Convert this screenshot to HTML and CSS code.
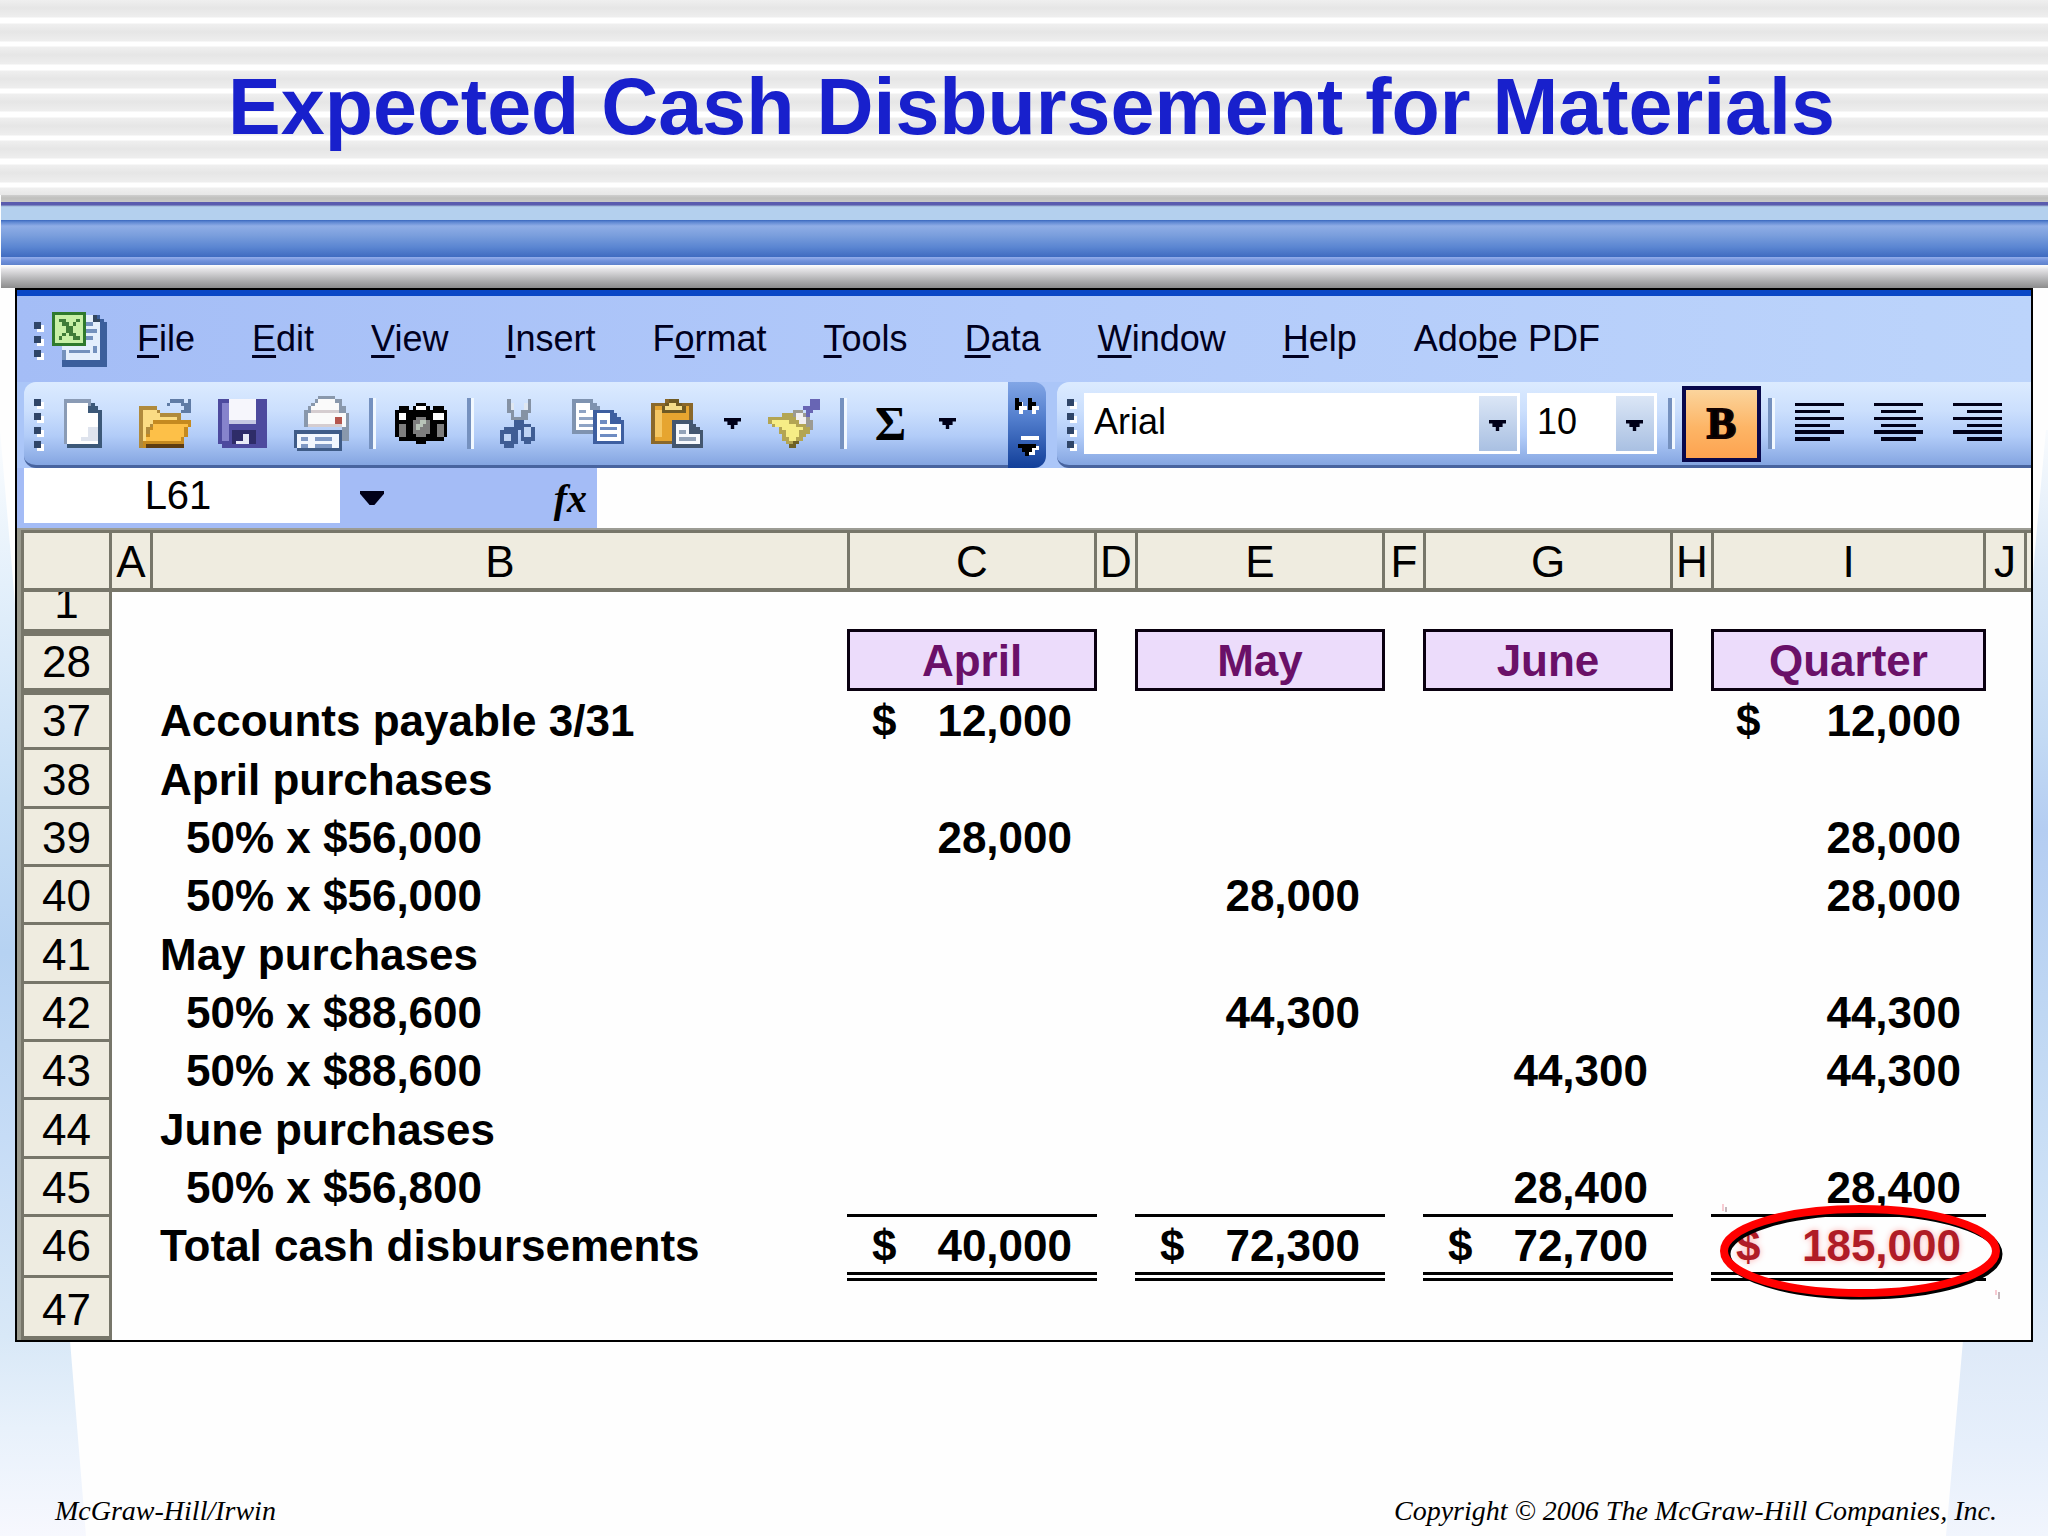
FILE: index.html
```html
<!DOCTYPE html>
<html lang="en">
<head>
    <meta charset="UTF-8">
    <meta name="viewport" content="width=device-width, initial-scale=1.0">
    <title>Expected Cash Disbursement for Materials</title>
    <link rel="stylesheet" href="styles.css">
</head>
<body>
    <header class="banner">
        <h1>Expected Cash Disbursement for Materials</h1>
    </header>
    <div class="bands"></div>

    <main class="window">
        <div class="title-strip"></div>

        <nav class="menu-bar">
            <span class="grip"><i></i><i></i><i></i></span>
            <svg class="icon" viewBox="0 0 16 16" shape-rendering="crispEdges">
                <path fill="#3c5f9c" d="M13 1h1v1h1v1h1v13H3v-2h10z"/>
                <path fill="#e4effc" d="M3 1h10v1h1v12H3z"/>
                <path fill="#7391bd" d="M10 3h2v1h-2zM10 5h3v1h-3zM10 7h2v1h-2zM5 11h6v1H5zM12 10h1v2h-1zM3 11h1v3H3z"/>
                <path fill="#34475f" d="M12 1h1v1h1v1h-2z"/>
                <path fill="#2f7a2c" d="M0 0h10v10H0z"/>
                <path fill="#c8f0a6" d="M1 1h8v8H1z"/>
                <path fill="#3f7c38" d="M2 2h2v1h1v1h1V3h1V2h1v1H7v1H6v2h1v1h1v1H6V7H5V6H4v1H3v1H2V7h1V6h1V4H3V3H2z"/>
            </svg>
            <div class="menu-items">
                <button><u>F</u>ile</button>
                <button><u>E</u>dit</button>
                <button><u>V</u>iew</button>
                <button><u>I</u>nsert</button>
                <button>F<u>o</u>rmat</button>
                <button><u>T</u>ools</button>
                <button><u>D</u>ata</button>
                <button><u>W</u>indow</button>
                <button><u>H</u>elp</button>
                <button>Ado<u>b</u>e PDF</button>
            </div>
        </nav>

        <div class="toolbars">
            <div class="toolbar standard">
                <span class="grip"><i></i><i></i><i></i><i></i></span>
                <button class="tool" aria-label="New">
                    <svg class="icon" viewBox="0 0 16 16" shape-rendering="crispEdges">
                        <path fill="#8a9bb5" d="M2 1h8v1h1v1h1v1h1v10H2z"/>
                        <path fill="#fff" d="M3 2h6v3h3v9H3z"/>
                        <path fill="#dfe4ee" d="M9 9h3v4H7v-1h2z"/>
                        <path fill="#3c5878" d="M10 2h1v1h1v1h1v11H3v-1h9V5H9V3h1z"/>
                    </svg>
                </button>
                <button class="tool" aria-label="Open">
                    <svg class="icon" viewBox="0 0 16 16" shape-rendering="crispEdges">
                        <path fill="#b08a3c" d="M1 3h5v1h1v1h6v3H5v7H1z"/>
                        <path fill="#fbdc84" d="M2 4h4v1h1v1h5v2H4v1H3v4H2z"/>
                        <path fill="#c58a20" d="M5 7h11v2h-1v3h-1v2h-1v1H2v-2h1v-2h1V9h1z"/>
                        <path fill="#fdc048" d="M5 8h10v1h-1v3h-1v1H3v-1h1v-2h1z"/>
                        <path fill="#5d3d12" d="M3 14h11v1H3z"/>
                        <path fill="#5f7ba5" d="M10 1h4v1h1V1h1v4h-3V4h1V3h-1V2h-3v1H9V2h1z"/>
                    </svg>
                </button>
                <button class="tool" aria-label="Save">
                    <svg class="icon" viewBox="0 0 16 16" shape-rendering="crispEdges">
                        <path fill="#4d4a9e" d="M1 1h14v14H2v-1H1z"/>
                        <path fill="#8683cc" d="M2 2h2v11H2z"/>
                        <path fill="#f6f6fc" d="M4 1h8v7H4z"/>
                        <path fill="#c5c8e4" d="M4 7h8v1H4z"/>
                        <path fill="#2e2c68" d="M5 10h7v4H5z"/>
                        <path fill="#e8eaf6" d="M8 11h2v3H6v-1h2z"/>
                    </svg>
                </button>
                <button class="tool" aria-label="Print">
                    <svg class="icon" viewBox="0 0 16 16" shape-rendering="crispEdges">
                        <path fill="#8998ac" d="M7 0h5v1h2v2h1v2h1v8h-2V9H3V4h1V3h1V2h1V1h1z"/>
                        <path fill="#fafafa" d="M7 1h5v1h1v3h2v4H4V5h1V3h1V2h1z"/>
                        <path fill="#d5cdd0" d="M5 4h8v1H5zM4 8h10v1H4z"/>
                        <path fill="#b5564e" d="M12 6h2v2h-2z"/>
                        <path fill="#3f5c88" d="M0 10h14v6H1v-1H0z"/>
                        <path fill="#f2f7fe" d="M1 11h12v4H1z"/>
                        <path fill="#7f99c4" d="M2 12h2v1H2zM6 12h5v1H6zM2 14h2v1H2zM6 14h5v1H6z"/>
                    </svg>
                </button>
                <span class="sep"></span>
                <button class="tool" aria-label="Camera">
                    <svg class="icon" viewBox="0 0 16 16" shape-rendering="crispEdges">
                        <path fill="#000" d="M7 2h3v1h1v1h1V3h3v1h1v8h-1v1h-5v1H7v-1H2v-1H1V4h1V3h3v1h1V3h1z"/>
                        <path fill="#fff" d="M7 3h3v1H7zM2 5h2v2H2zM12 5h3v2h-3z"/>
                        <path fill="#7d7d7d" d="M2 8h2v4H2zM13 8h2v4h-2zM6 7h1V6h3v1h1v4h-1v1H7v-1H6z"/>
                        <path fill="#b9c4b9" d="M8 7h2v1H9v1H8v1H7V8h1z"/>
                    </svg>
                </button>
                <span class="sep"></span>
                <button class="tool" aria-label="Cut">
                    <svg class="icon" viewBox="0 0 16 16" shape-rendering="crispEdges">
                        <path fill="#8592a4" d="M5 1h1v3h1v2h1v2H7V7H6V5H5zM11 1h1v4h-1v2h-1v1H8V6h1V4h1V2h1z"/>
                        <path fill="#dfe7f1" d="M6 2h1v2H6zM10 2h1v2h-1z"/>
                        <path fill="#3f5d94" d="M7 7h3v1h2v1h1v4h-1v1h-2v-1H9v-3H8v4H7v1H4v-1H3v-4h1V9h3z"/>
                        <path fill="#bfd4f5" d="M4 11h2v2H4zM10 9h2v3h-2z"/>
                    </svg>
                </button>
                <button class="tool" aria-label="Copy">
                    <svg class="icon" viewBox="0 0 16 16" shape-rendering="crispEdges">
                        <path fill="#7f93b0" d="M1 1h6v1h1v1h1v8H1z"/>
                        <path fill="#fff" d="M2 2h4v2h2v6H2z"/>
                        <path fill="#8ea3c4" d="M3 4h2v1H3zM3 6h4v1H3zM3 8h4v1H3z"/>
                        <path fill="#3e5fa0" d="M7 4h6v1h1v1h1v1h1v7H7z"/>
                        <path fill="#fff" d="M8 5h4v3h3v5H8z"/>
                        <path fill="#6e8cc2" d="M9 7h2v1H9zM9 9h5v1H9zM9 11h5v1H9z"/>
                    </svg>
                </button>
                <button class="tool" aria-label="Paste">
                    <svg class="icon" viewBox="0 0 16 16" shape-rendering="crispEdges">
                        <path fill="#8a682a" d="M1 2h4V1h4v1h4v12H1z"/>
                        <path fill="#e6a530" d="M2 3h10v10H2z"/>
                        <path fill="#f5c763" d="M2 4h2v8H2z"/>
                        <path fill="#6f5a24" d="M4 3h1V2h1V1h3v1h1v1h1v2H4z"/>
                        <path fill="#f4dc8a" d="M6 2h2v2H6zM5 3h5v1H5z"/>
                        <path fill="#43566f" d="M7 7h6v1h1v1h1v1h1v5H7z"/>
                        <path fill="#f7f9fc" d="M8 8h4v3h3v3H8z"/>
                        <path fill="#93a3b8" d="M9 10h2v1H9zM9 12h5v1H9z"/>
                    </svg>
                </button>
                <button class="arrow" aria-label="Paste options"></button>
                <button class="tool" aria-label="Format Painter">
                    <svg class="icon" viewBox="0 0 16 16" shape-rendering="crispEdges">
                        <path fill="#6865b4" d="M13 1h3v3h-2v1h-1v1h-1V4h-1V3h2z"/>
                        <path fill="#9c9a92" d="M8 4h3v1h1v1h1v1h1v3h-1V9h-1V8h-2V7H9V6H7V5h1z"/>
                        <path fill="#f1eef0" d="M9 5h2v1h1v2h-2V7H9z"/>
                        <path fill="#b3a553" d="M1 6h4V5h3v1h1v1h1v1h2v1h1v2h-1v1h-1v1h-1v1H9v1H7v-1H6v-1H5v-2H4V9H2V8H1z"/>
                        <path fill="#f6ed86" d="M2 7h5v1h2v1h2v1h-1v2H9v1H7v-1H6v-2H5V9H3V8H2z"/>
                        <path fill="#6e6126" d="M8 13h2v1H9v1H7v-1h1z"/>
                    </svg>
                </button>
                <span class="sep"></span>
                <button class="tool sigma" aria-label="AutoSum">Σ</button>
                <button class="arrow" aria-label="AutoSum options"></button>
            </div>
            <button class="overflow" aria-label="Toolbar Options">
                <svg viewBox="0 0 38 86" shape-rendering="crispEdges">
                    <path fill="#fff" d="M11 20h4v4h4v4h-4v4h-4zM24 20h4v4h3v4h-3v4h-4zM13 54h18v4H13zM20 64h11v4h-4v5h-7z"/>
                    <path fill="#000" d="M7 16h4v4h3v4h-3v4H7zM20 16h4v4h4v4h-4v4h-4zM10 62h18v4h-4v4h-3v4h-4v-4h-3v-4h-4z"/>
                </svg>
            </button>
            <div class="toolbar formatting">
                <span class="grip"><i></i><i></i><i></i><i></i></span>
                <div class="combo font-name">
                    <select aria-label="Font"><option>Arial</option></select>
                    <span class="combo-arrow"></span>
                </div>
                <div class="combo font-size">
                    <select aria-label="Font Size"><option>10</option></select>
                    <span class="combo-arrow"></span>
                </div>
                <span class="sep"></span>
                <button class="bold-button" aria-label="Bold">B</button>
                <span class="sep"></span>
                <div class="align-group">
                    <button class="tool" aria-label="Align Left">
                        <svg class="icon" viewBox="0 0 16 16" shape-rendering="crispEdges">
                            <path fill="#000018" d="M1 2h14v1H1zM1 4h10v1H1zM1 6h14v1H1zM1 8h10v1H1zM1 10h14v1H1zM1 12h10v1H1z"/>
                        </svg>
                    </button>
                    <button class="tool" aria-label="Center">
                        <svg class="icon" viewBox="0 0 16 16" shape-rendering="crispEdges">
                            <path fill="#000018" d="M1 2h14v1H1zM3 4h10v1H3zM1 6h14v1H1zM3 8h10v1H3zM1 10h14v1H1zM3 12h10v1H3z"/>
                        </svg>
                    </button>
                    <button class="tool" aria-label="Align Right">
                        <svg class="icon" viewBox="0 0 16 16" shape-rendering="crispEdges">
                            <path fill="#000018" d="M1 2h14v1H1zM5 4h10v1H5zM1 6h14v1H1zM5 8h10v1H5zM1 10h14v1H1zM5 12h10v1H5z"/>
                        </svg>
                    </button>
                </div>
            </div>
        </div>

        <div class="formula-bar">
            <input class="name-box" type="text" value="L61" aria-label="Name Box">
            <div class="formula-tools">
                <button class="arrow large" aria-label="Names"></button>
                <button class="fx" aria-label="Insert Function"><span>f</span>x</button>
            </div>
            <input class="formula" type="text" aria-label="Formula">
        </div>

        <div class="sheet">
            <table>
                <colgroup>
                    <col class="w-head"><col class="w-gap"><col>
                    <col class="w-month"><col class="w-gap">
                    <col class="w-month"><col class="w-gap">
                    <col class="w-month"><col class="w-gap">
                    <col class="w-quarter"><col class="w-gap"><col class="w-edge">
                </colgroup>
                <thead>
                    <tr>
                        <th></th><th>A</th><th>B</th><th>C</th><th>D</th><th>E</th>
                        <th>F</th><th>G</th><th>H</th><th>I</th><th>J</th><th></th>
                    </tr>
                </thead>
                <tbody>
                    <tr class="first">
                        <th><span class="clipped">1</span></th>
                        <td colspan="11"></td>
                    </tr>
                    <tr class="months">
                        <th>28</th><td></td><td></td>
                        <td><div class="month">April</div></td><td></td>
                        <td><div class="month">May</div></td><td></td>
                        <td><div class="month">June</div></td><td></td>
                        <td><div class="month">Quarter</div></td><td></td><td></td>
                    </tr>
                    <tr class="opening">
                        <th>37</th><td></td><td class="label">Accounts payable 3/31</td>
                        <td><div class="money"><span>$</span><span>12,000</span></div></td><td></td>
                        <td></td><td></td>
                        <td></td><td></td>
                        <td><div class="money"><span>$</span><span>12,000</span></div></td><td></td><td></td>
                    </tr>
                    <tr class="group">
                        <th>38</th><td></td><td class="label">April purchases</td>
                        <td></td><td></td><td></td><td></td><td></td><td></td><td></td><td></td><td></td>
                    </tr>
                    <tr>
                        <th>39</th><td></td><td class="label indent">50% x $56,000</td>
                        <td class="number">28,000</td><td></td>
                        <td></td><td></td>
                        <td></td><td></td>
                        <td class="number">28,000</td><td></td><td></td>
                    </tr>
                    <tr>
                        <th>40</th><td></td><td class="label indent">50% x $56,000</td>
                        <td></td><td></td>
                        <td class="number">28,000</td><td></td>
                        <td></td><td></td>
                        <td class="number">28,000</td><td></td><td></td>
                    </tr>
                    <tr class="group">
                        <th>41</th><td></td><td class="label">May purchases</td>
                        <td></td><td></td><td></td><td></td><td></td><td></td><td></td><td></td><td></td>
                    </tr>
                    <tr>
                        <th>42</th><td></td><td class="label indent">50% x $88,600</td>
                        <td></td><td></td>
                        <td class="number">44,300</td><td></td>
                        <td></td><td></td>
                        <td class="number">44,300</td><td></td><td></td>
                    </tr>
                    <tr>
                        <th>43</th><td></td><td class="label indent">50% x $88,600</td>
                        <td></td><td></td>
                        <td></td><td></td>
                        <td class="number">44,300</td><td></td>
                        <td class="number">44,300</td><td></td><td></td>
                    </tr>
                    <tr class="group">
                        <th>44</th><td></td><td class="label">June purchases</td>
                        <td></td><td></td><td></td><td></td><td></td><td></td><td></td><td></td><td></td>
                    </tr>
                    <tr>
                        <th>45</th><td></td><td class="label indent">50% x $56,800</td>
                        <td></td><td></td>
                        <td></td><td></td>
                        <td class="number">28,400</td><td></td>
                        <td class="number">28,400</td><td></td><td></td>
                    </tr>
                    <tr class="totals">
                        <th>46</th><td></td><td class="label">Total cash disbursements</td>
                        <td><div class="money total"><span>$</span><span>40,000</span></div></td><td></td>
                        <td><div class="money total"><span>$</span><span>72,300</span></div></td><td></td>
                        <td><div class="money total"><span>$</span><span>72,700</span></div></td><td></td>
                        <td>
                            <div class="money total circled">
                                <span>$</span><span>185,000</span>
                                <svg class="ring" viewBox="0 0 284 95">
                                    <ellipse cx="143" cy="49" rx="136" ry="42" fill="none" stroke="#000" stroke-width="7"/>
                                    <ellipse cx="140" cy="46" rx="136" ry="42" fill="none" stroke="#f00" stroke-width="8"/>
                                    <path stroke="#f29aa8" d="M3 -1v7M276 85v5"/>
                                    <path stroke="#8a6f78" d="M6 2v5M279 87v7"/>
                                </svg>
                            </div>
                        </td><td></td><td></td>
                    </tr>
                    <tr class="last">
                        <th>47</th>
                        <td colspan="11"></td>
                    </tr>
                </tbody>
            </table>
        </div>
    </main>

    <footer class="footer">
        <span>McGraw-Hill/Irwin</span>
        <span>Copyright © 2006 The McGraw-Hill Companies, Inc.</span>
    </footer>
</body>
</html>
```
FILE: styles.css
```css
* {
    box-sizing: border-box;
}

body {
    position: relative;
    margin: 0;
    min-height: 100vh;
    display: flex;
    flex-direction: column;
    background: #fefefe;
    font-family: "Liberation Sans", Arial, sans-serif;
    color: #000;
    overflow-x: hidden;
}

/* pale blue wedges down both sides of the slide */
body::before,
body::after {
    content: "";
    position: absolute;
    top: 0;
    bottom: 0;
    z-index: -1;
}

body::before {
    left: 0;
    width: 86px;
    background: linear-gradient(#fff 26%, #e4f0fb 38%, #c6def5 52%, #b6d2f2 62%, #c6dcf6 74%, #d8e8f7 87%, #e8f1fb 93%, #f7f8fe 100%);
    clip-path: polygon(0 28%, 17% 39%, 50% 66%, 81% 87%, 100% 100%, 0 100%);
}

body::after {
    right: 0;
    width: 102px;
    background: linear-gradient(#fff 26%, #dbe9f8 37%, #c3daf4 48%, #b4cdf2 54%, #bfd7f3 66%, #d0e3f7 80%, #dfeaf8 88%, #e6effb 94%, #f1f5fd 100%);
    clip-path: polygon(98% 28%, 87% 36%, 50% 66%, 17% 87%, 0 100%, 100% 100%, 100% 28%);
}

button,
input,
select {
    font: inherit;
    color: inherit;
    border: none;
    border-radius: 0;
    background: none;
    margin: 0;
    padding: 0;
}

button {
    cursor: pointer;
}

/* slide heading */
.banner {
    height: 195px;
    padding: 62px 0 0 15px;
    background: linear-gradient(#efefef 0, #e6e6e6 8px, #eee 17px, #fff 18px, #fff 23px, #efefef 24px, #e6e6e6 32px, #eee 41px, #fff 42px, #fff 46px, #efefef 47px);
    background-size: 100% 47px;
}

.banner h1 {
    margin: 0;
    font-size: 79px;
    line-height: 90px;
    text-align: center;
    color: #1820cc;
}

.bands {
    height: 93px;
    margin-left: 1px;
    background: linear-gradient(
        #cfcfcf 0, #c0c0be 3px, #c8c8c6 7px,
        #5a5cae 7px, #5a5cae 10px, #9bb3d3 11px, #b4d0ee 12px, #b4d0ee 25px,
        #3a66bd 25px, #5d87d2 27px, #8fade6 31px, #7b9fdd 40px, #5b86d2 52px, #3f6bc0 62px,
        #94aeea 62px, #6f90da 66px, #5e82cc 70px,
        #fdfdff 70px, #f4f4f4 72px, #e6e5e8 74px, #b4b4b6 84px, #8c8c8c 93px
    );
}

/* spreadsheet window */
.window {
    margin: 0 15px;
    border: 2px solid #000;
    background: #fefefe;
}

.title-strip {
    height: 6px;
    background: #0a47c6;
}

.menu-bar {
    display: flex;
    align-items: center;
    height: 86px;
    padding-left: 17px;
    background: linear-gradient(to right, #a4bdf6, #b2cafa 50%, #bcd4fb);
}

.menu-bar .icon {
    margin: 0 30px 0 8px;
}

.menu-items {
    display: flex;
    gap: 57px;
    font-size: 36px;
    line-height: 40px;
    color: #000020;
}

.menu-items button {
    white-space: nowrap;
}

.menu-items u {
    text-decoration-thickness: 3px;
    text-underline-offset: 4px;
    text-decoration-skip-ink: none;
}

.grip {
    display: flex;
    flex-direction: column;
    flex: none;
    gap: 7px;
    width: 10px;
}

.grip i {
    width: 7px;
    height: 7px;
    background: #2f4568;
    box-shadow: 3px 3px 0 #fff;
}

.icon {
    display: block;
    flex: none;
    width: 55px;
    height: 55px;
}

.toolbars {
    display: flex;
    height: 86px;
    padding-left: 7px;
    background: #abc6f8;
}

.toolbar {
    display: flex;
    align-items: center;
    background: linear-gradient(#dcebff, #cbdffd 35%, #b2ccf8 65%, #84a5e1);
    border-bottom: 3px solid #48649f;
}

.standard {
    gap: 24px;
    padding: 0 52px 0 10px;
    border-radius: 12px 0 0 12px;
}

.standard .grip {
    margin-right: -11px;
}

.standard .sep {
    margin: 0 -8px 0 -4px;
}

.standard .arrow {
    margin-left: -3px;
}

.tool {
    flex: none;
    width: 55px;
    height: 55px;
}

.sep {
    flex: none;
    width: 7px;
    height: 51px;
    border-left: 4px solid #7591bf;
    border-right: 3px solid #f1f8ff;
}

.arrow {
    flex: none;
    width: 17px;
    height: 11px;
    background: #000018;
    clip-path: polygon(0 0, 100% 0, 100% 32%, 80% 32%, 80% 64%, 60% 64%, 60% 100%, 40% 100%, 40% 64%, 20% 64%, 20% 32%, 0 32%);
}

.arrow.large {
    width: 24px;
    height: 14px;
    clip-path: polygon(0 0, 100% 0, 100% 20%, 60% 100%, 40% 100%, 0 20%);
}

.sigma {
    font-family: "Liberation Serif", "Times New Roman", serif;
    font-size: 48px;
    font-weight: bold;
    line-height: 55px;
}

.overflow {
    flex: none;
    width: 38px;
    background: linear-gradient(#82a6e6, #4f7bcb 45%, #123f99);
    border-radius: 0 12px 12px 0;
}

.overflow svg {
    display: block;
    width: 38px;
    height: 86px;
}

.formatting {
    flex: 1;
    gap: 7px;
    margin-left: 11px;
    padding-left: 10px;
    border-radius: 12px 0 0 12px;
}

.combo {
    position: relative;
    flex: none;
    height: 61px;
    background: #fff;
    font-size: 36px;
}

.font-name {
    width: 436px;
}

.font-size {
    width: 130px;
    margin-right: 4px;
}

.combo select {
    width: 100%;
    height: 57px;
    padding-left: 10px;
    appearance: none;
}

.combo-arrow {
    position: absolute;
    top: 3px;
    right: 3px;
    bottom: 3px;
    width: 38px;
    background: linear-gradient(#dbe6f6, #a9c0e2);
    pointer-events: none;
}

.combo-arrow::after {
    content: "";
    position: absolute;
    top: 24px;
    left: 10px;
    width: 17px;
    height: 11px;
    background: #000018;
    clip-path: polygon(0 0, 100% 0, 100% 32%, 80% 32%, 80% 64%, 60% 64%, 60% 100%, 40% 100%, 40% 64%, 20% 64%, 20% 32%, 0 32%);
}

.bold-button {
    flex: none;
    width: 79px;
    height: 76px;
    border: 4px solid #08084c;
    background: linear-gradient(#fbd49c, #fdb566 55%, #fda350);
    font-family: "Liberation Serif", "Times New Roman", serif;
    font-size: 44px;
    font-weight: bold;
    -webkit-text-stroke: 2px #140200;
}

.align-group {
    display: flex;
    gap: 24px;
    margin-left: 10px;
}

/* name box and formula line */
.formula-bar {
    display: flex;
    height: 62px;
    padding-left: 7px;
    background: #a4bcf6;
    border-bottom: 2px solid #9c9c94;
}

.name-box {
    width: 316px;
    height: 55px;
    padding-right: 8px;
    background: #fff;
    font-size: 40px;
    text-align: center;
}

.formula-tools {
    display: flex;
    align-items: center;
    justify-content: space-between;
    width: 257px;
    padding: 0 10px 0 20px;
}

.fx {
    font-family: "Liberation Serif", "Times New Roman", serif;
    font-size: 40px;
    font-style: italic;
    font-weight: bold;
}

.formula {
    flex: 1;
    background: #fefefe;
    padding: 0 8px;
    font-size: 40px;
}

/* grid */
.sheet {
    padding-left: 4px;
    background: #9a9a8e;
}

table {
    width: 100%;
    table-layout: fixed;
    border-collapse: separate;
    border-spacing: 0;
    background: #fefefe;
    font-size: 44px;
    line-height: 44px;
}

.w-head {
    width: 91px;
}

.w-gap {
    width: 41px;
}

.w-month {
    width: 247px;
}

.w-quarter {
    width: 272px;
}

.w-edge {
    width: 4px;
}

th {
    padding: 0 0 4px;
    background: #efece0;
    border-right: 3px solid #77766a;
    border-bottom: 3px solid #77766a;
    font-weight: normal;
    vertical-align: bottom;
}

thead th {
    height: 62px;
    padding-bottom: 4px;
    border-top: 3px solid #77766a;
    border-bottom-width: 4px;
}

thead th:last-child {
    border-right: none;
}

th:first-child {
    border-left: 3px solid #77766a;
}

td {
    padding: 0 0 7px;
    font-weight: bold;
    vertical-align: bottom;
    white-space: nowrap;
}

tbody tr {
    height: 58px;
}

tbody .first {
    height: 44px;
}

tbody .months,
tbody .group {
    height: 59px;
}

tbody .opening {
    height: 55px;
}

tbody .totals {
    height: 61px;
}

tbody .last {
    height: 62px;
}

.first th,
.months th {
    border-bottom-width: 7px;
}

/* the scrolled row shows only its lower part */
.clipped {
    display: flex;
    align-items: flex-end;
    justify-content: center;
    height: 33px;
    overflow: hidden;
}

.label {
    padding-left: 7px;
}

.indent {
    padding-left: 33px;
}

.number {
    padding-right: 25px;
    text-align: right;
}

.months td {
    padding: 0;
}

.month {
    height: 62px;
    margin: -7px 0 4px -3px;
    padding-top: 3px;
    border: 3px solid #0a0010;
    background: #ecdcfb;
    color: #6a1068;
    line-height: 52px;
    text-align: center;
}

.money {
    display: flex;
    justify-content: space-between;
    padding: 0 25px 0 22px;
}

.totals td {
    padding-bottom: 0;
}

.totals .label {
    padding-bottom: 10px;
}

.totals th {
    padding-bottom: 7px;
}

.total {
    position: relative;
    align-items: flex-end;
    height: 67px;
    margin: -3px 0 -3px -3px;
    padding: 0 25px 4px;
    border-top: 3px solid #000;
    border-bottom: 9px double #000;
}

.circled {
    color: #b01c26;
    text-shadow: 0 0 6px #ffb4b4;
}

.ring {
    position: absolute;
    top: -12px;
    left: 9px;
    width: 284px;
    height: 95px;
    overflow: visible;
}

.last th {
    border-bottom-width: 4px;
}

/* credits */
.footer {
    display: flex;
    justify-content: space-between;
    margin-top: auto;
    padding: 0 51px 9px 55px;
    font-family: "Liberation Serif", "Times New Roman", serif;
    font-size: 28px;
    font-style: italic;
    line-height: 32px;
}
```
